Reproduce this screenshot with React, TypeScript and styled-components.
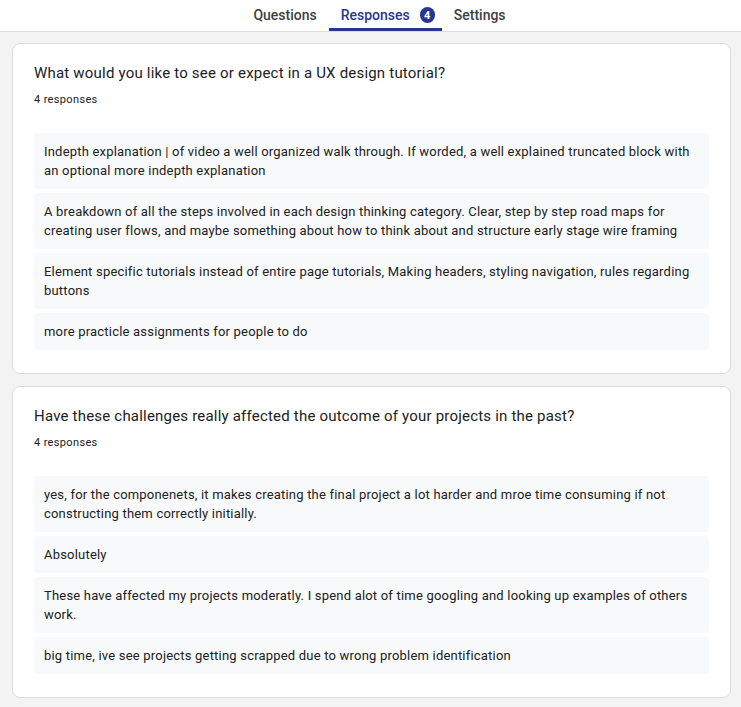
import React from "react";
import styled, { createGlobalStyle } from "styled-components";

const Global = createGlobalStyle`
  html, body { margin: 0; padding: 0; background: #f3f3f3; }
  body { font-family: Roboto, "Liberation Sans", Arial, sans-serif; color: #202124; }
`;

const Page = styled.div`
  display: flex;
  flex-direction: column;
  min-height: 707px;
  background: #f3f3f3;
`;

const TabBar = styled.nav`
  display: flex;
  justify-content: center;
  height: 31px;
  background: #ffffff;
  border-bottom: 1px solid #dadce0;
  padding-left: 18px;
`;

const Tab = styled.div<{ $active?: boolean }>`
  display: flex;
  align-items: center;
  gap: 10px;
  height: 31px;
  padding: 3px 12px 1px;
  box-sizing: border-box;
  font-size: 14px;
  font-weight: 500;
  color: ${(p) => (p.$active ? "#283593" : "#3c4043")};
  border-bottom: 3px solid ${(p) => (p.$active ? "#283593" : "transparent")};
  margin-bottom: -1px;
`;

const Badge = styled.span`
  display: inline-flex;
  align-items: center;
  justify-content: center;
  min-width: 15px;
  height: 16px;
  margin-right: -5px;
  border-radius: 8px;
  background: #283593;
  color: #ffffff;
  font-size: 11px;
  font-weight: 700;
`;

const Content = styled.main`
  display: flex;
  flex-direction: column;
  gap: 12px;
  padding: 11px 10px 12px 12px;
`;

const Card = styled.section`
  background: #ffffff;
  border: 1px solid #dadce0;
  border-radius: 8px;
  padding: 17px 21px 23px 21px;
  display: flex;
  flex-direction: column;
`;

const Title = styled.h2`
  margin: 0;
  font-size: 15px;
  font-weight: 400;
  line-height: 24px;
  letter-spacing: 0.2px;
  color: #202124;
`;

const Count = styled.div`
  margin-top: 6px;
  font-size: 11px;
  line-height: 17px;
  letter-spacing: 0.35px;
  color: #202124;
`;

const List = styled.div`
  margin-top: 25px;
  display: flex;
  flex-direction: column;
  gap: 4px;
`;

const Item = styled.div`
  background: #f8f9fa;
  border-radius: 4px;
  padding: 9px 10px;
  font-size: 13px;
  line-height: 19px;
  letter-spacing: 0.2px;
  color: #202124;
`;

const questions = [
  {
    title: "What would you like to see or expect in a UX design tutorial?",
    answers: [
      "Indepth explanation | of video a well organized walk through. If worded, a well explained truncated block with an optional more indepth explanation",
      "A breakdown of all the steps involved in each design thinking category. Clear, step by step road maps for creating user flows, and maybe something about how to think about and structure early stage wire framing",
      "Element specific tutorials instead of entire page tutorials, Making headers, styling navigation, rules regarding buttons",
      "more practicle assignments for people to do",
    ],
  },
  {
    title: "Have these challenges really affected the outcome of your projects in the past?",
    answers: [
      "yes, for the componenets, it makes creating the final project a lot harder and mroe time consuming if not constructing them correctly initially.",
      "Absolutely",
      "These have affected my projects moderatly. I spend alot of time googling and looking up examples of others work.",
      "big time, ive see projects getting scrapped due to wrong problem identification",
    ],
  },
];

export default function App() {
  return (
    <Page>
      <Global />
      <TabBar>
        <Tab>Questions</Tab>
        <Tab $active>
          Responses <Badge>4</Badge>
        </Tab>
        <Tab>Settings</Tab>
      </TabBar>
      <Content>
        {questions.map((q) => (
          <Card key={q.title}>
            <Title>{q.title}</Title>
            <Count>{q.answers.length} responses</Count>
            <List>
              {q.answers.map((a) => (
                <Item key={a}>{a}</Item>
              ))}
            </List>
          </Card>
        ))}
      </Content>
    </Page>
  );
}
